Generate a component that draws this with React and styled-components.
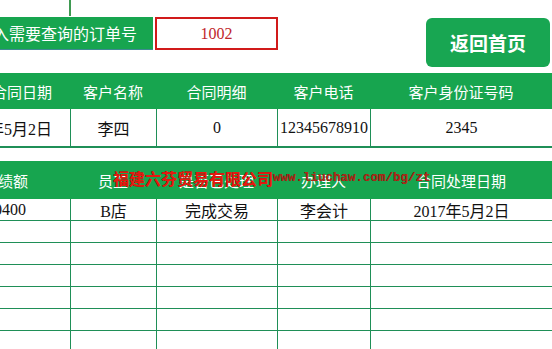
import React from "react";
import styled, { createGlobalStyle } from "styled-components";

const GREEN = "#17a54f";
const LINE = "#1f8f57";
const CJK = `"Noto Sans CJK SC", "Noto Sans", sans-serif`;
const CELL_FONT = `"Liberation Serif", "Noto Sans CJK SC", serif`;

const Global = createGlobalStyle`
  html, body {
    margin: 0;
    padding: 0;
    background: #ffffff;
    overflow: hidden;
  }
  body {
    width: 552px;
    height: 349px;
    font-family: ${CJK};
  }
`;

const Page = styled.div`
  position: relative;
  width: 552px;
  height: 349px;
  overflow: hidden;
`;

const QueryBar = styled.div`
  display: flex;
  align-items: flex-start;
  height: 73px;
  padding-top: 17px;
  box-sizing: border-box;
`;

const QueryLabel = styled.div`
  position: relative;
  width: 153px;
  height: 33px;
  box-sizing: border-box;
  background: ${GREEN};
  border-bottom: 1px solid #3d8a92;
  color: #ffffff;
  font-size: 16px;
  display: flex;
  align-items: center;
  justify-content: flex-end;
  padding-right: 16px;
  white-space: nowrap;

  &::before {
    content: "";
    position: absolute;
    left: 69px;
    top: -17px;
    width: 2px;
    height: 16px;
    background: #3f9a52;
  }
`;

const OrderInput = styled.div`
  margin-left: 2px;
  width: 123px;
  height: 33px;
  box-sizing: border-box;
  border: 2px solid #d11a1a;
  display: flex;
  align-items: center;
  justify-content: center;
  font-family: "Liberation Serif", serif;
  font-size: 16px;
  color: #c0262b;
`;

const HomeButton = styled.button`
  margin-left: auto;
  margin-right: 2px;
  margin-top: 1px;
  width: 124px;
  height: 49px;
  border: none;
  border-radius: 6px;
  background: #18a652;
  color: #ffffff;
  font-family: ${CJK};
  font-weight: 700;
  font-size: 19px;
  cursor: pointer;
`;

const Table = styled.div`
  display: grid;
  grid-template-columns: 70px 86px 121px 93px 1fr;
  margin-top: ${(p) => p.$gap || 0}px;
`;

const HeadCell = styled.div`
  height: ${(p) => p.$h}px;
  background: ${GREEN};
  color: #ffffff;
  font-size: 15px;
  display: flex;
  align-items: center;
  justify-content: ${(p) => (p.$lead ? "flex-end" : "center")};
  padding-right: ${(p) => (p.$lead ? p.$lead : 0)}px;
  white-space: nowrap;
`;

const Cell = styled.div`
  height: ${(p) => p.$h}px;
  box-sizing: border-box;
  border-bottom: ${(p) => p.$rule}px solid ${LINE};
  border-left: ${(p) => (p.$lead ? "none" : `1px solid ${LINE}`)};
  color: #111111;
  font-family: ${CELL_FONT};
  font-size: 16px;
  display: flex;
  align-items: center;
  justify-content: ${(p) => (p.$lead ? "flex-end" : "center")};
  padding-right: ${(p) => (p.$lead ? p.$lead : 0)}px;
  white-space: nowrap;
`;

const Watermark = styled.div`
  position: absolute;
  left: 113px;
  top: 166px;
  display: flex;
  align-items: center;
  white-space: nowrap;
  pointer-events: none;
  text-shadow: 0 0 0.6px #4a1a0c;
`;

const MarkName = styled.span`
  font-family: ${CJK};
  font-weight: 700;
  font-size: 16px;
  color: #e8190f;
`;

const MarkUrl = styled.span`
  font-family: "Liberation Mono", monospace;
  font-weight: 700;
  font-size: 12.5px;
  color: #b02a18;
`;

const contractHead = ["合同日期", "客户名称", "合同明细", "客户电话", "客户身份证号码"];
const contractRow = ["2017年5月2日", "李四", "0", "12345678910", "2345"];

const dealHead = ["业绩额", "员工", "是否已处理", "办理人", "合同处理日期"];
const dealRows = [
  ["10400", "B店", "完成交易", "李会计", "2017年5月2日"],
  ["", "", "", "", ""],
  ["", "", "", "", ""],
  ["", "", "", "", ""],
  ["", "", "", "", ""],
  ["", "", "", "", ""],
  ["", "", "", "", ""],
];

export default function App() {
  return (
    <>
      <Global />
      <Page>
        <QueryBar>
          <QueryLabel>输入需要查询的订单号</QueryLabel>
          <OrderInput>1002</OrderInput>
          <HomeButton>返回首页</HomeButton>
        </QueryBar>

        <Table>
          {contractHead.map((t, i) => (
            <HeadCell key={t} $h={36} $lead={i === 0 ? 18 : 0}>
              {t}
            </HeadCell>
          ))}
          {contractRow.map((t, i) => (
            <Cell key={i} $h={39} $rule={2} $lead={i === 0 ? 18 : 0}>
              {t}
            </Cell>
          ))}
        </Table>

        <Table $gap={13}>
          {dealHead.map((t, i) => (
            <HeadCell key={t} $h={38} $lead={i === 0 ? 42 : 0}>
              {t}
            </HeadCell>
          ))}
          {dealRows.map((row, r) =>
            row.map((t, i) => (
              <Cell key={`${r}-${i}`} $h={22} $rule={1} $lead={i === 0 ? 44 : 0}>
                {t}
              </Cell>
            ))
          )}
        </Table>

        <Watermark>
          <MarkName>福建六芬贸易有限公司</MarkName>
          <MarkUrl>www.liuchaw.com/bg/zt</MarkUrl>
        </Watermark>
      </Page>
    </>
  );
}
